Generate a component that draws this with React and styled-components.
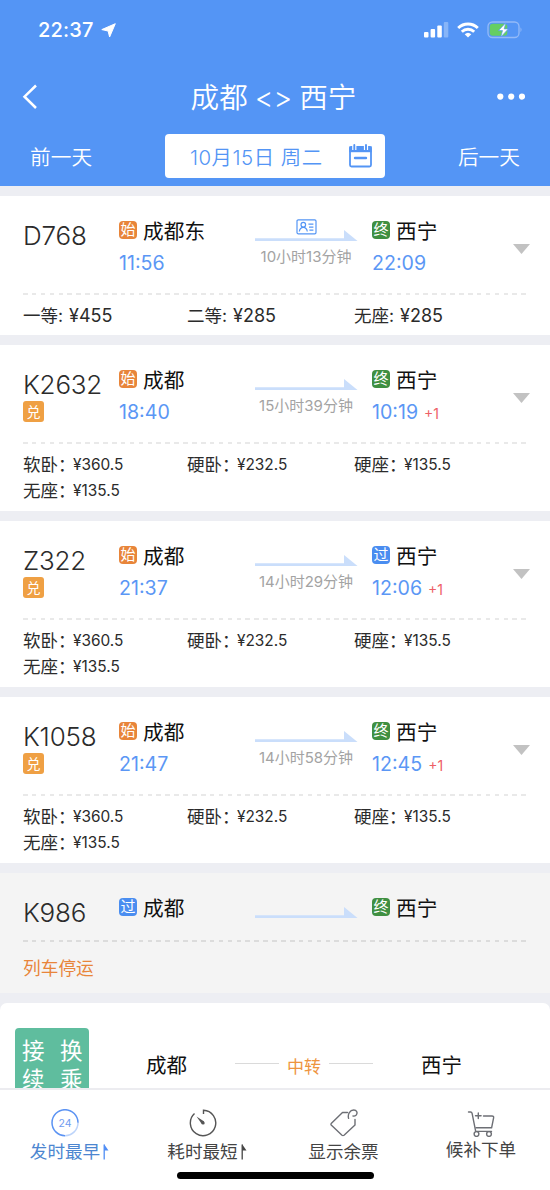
import styled, { createGlobalStyle } from 'styled-components';

// Define colors
const colors = {
    blue: '#5495f5',
    time: '#5b97f5',
    orange: '#e8853a',
    exchange: '#efa044',
    green: '#3f8f41',
    mint: '#5fbd9e',
    text: '#2b2b2b',
    grey: '#a3a3a3',
    red: '#ee5f66',
    gap: '#edeef3',
    white: '#fff',
};

const GlobalStyle = createGlobalStyle`
    * {
        box-sizing: border-box;
    }
    body {
        margin: 0;
        font-family: 'Inter', 'Noto Sans CJK SC', sans-serif;
        color: ${colors.text};
    }
    svg {
        display: block;
    }
`;

const Page = styled.div`
    width: 550px;
    height: 1190px;
    display: flex;
    flex-direction: column;
    overflow: hidden;
    background-color: ${colors.gap};
`;

const Header = styled.header`
    height: 186px;
    flex-shrink: 0;
    background-color: ${colors.blue};
    color: ${colors.white};
`;

const StatusBar = styled.div`
    height: 60px;
    padding: 0 28px 0 38px;
    display: flex;
    align-items: center;
    justify-content: space-between;
`;

const Clock = styled.div`
    display: flex;
    align-items: center;
    gap: 7px;
    font-size: 20px;
    font-weight: 500;
    letter-spacing: 0.2px;
`;

const StatusIcons = styled.div`
    display: flex;
    align-items: center;
    gap: 8px;
`;

const TitleBar = styled.div`
    height: 74px;
    padding: 0 25px 0 22px;
    display: grid;
    grid-template-columns: 30px 1fr 30px;
    align-items: center;
`;

const Title = styled.h1`
    margin: 0;
    padding-top: 1px;
    display: flex;
    justify-content: center;
    gap: 7px;
    font-size: 28.6px;
    line-height: 40px;
    font-weight: 350;
`;

const DayBar = styled.div`
    height: 44px;
    padding: 0 30px;
    display: flex;
    align-items: center;
    justify-content: space-between;
    font-size: 20.7px;
    font-weight: 350;
`;

const DateButton = styled.button`
    width: 220px;
    height: 44px;
    margin: 0;
    padding: 0 13px 0 25px;
    border: 0;
    border-radius: 4px;
    display: flex;
    align-items: center;
    justify-content: space-between;
    background-color: ${colors.white};
    color: ${colors.blue};
    font-family: inherit;
    font-size: 20.4px;
    font-weight: 350;
    letter-spacing: 0.5px;
    white-space: nowrap;
`;

const List = styled.main`
    flex: 1;
    min-height: 0;
    padding-top: 10px;
    display: flex;
    flex-direction: column;
    gap: 10px;
    overflow: hidden;
`;

const Card = styled.section`
    height: ${(p) => p.$height}px;
    flex-shrink: 0;
    padding: 0 20px 0 23px;
    background-color: ${(p) => (p.$stopped ? '#f4f4f4' : colors.white)};
`;

const TrainRow = styled.div`
    height: ${(p) => (p.$stopped ? 67 : 97)}px;
    display: grid;
    grid-template-columns: 96px 136px 117px 141px 17px;
    align-items: start;
`;

const TrainInfo = styled.div`
    padding-top: 24px;
`;

const TrainNo = styled.div`
    font-size: 26px;
    line-height: 32px;
    font-weight: 350;
    letter-spacing: -0.2px;
`;

const Exchange = styled.span`
    width: 21px;
    height: 21px;
    border-radius: 3px;
    display: flex;
    align-items: center;
    justify-content: center;
    background-color: ${colors.exchange};
    color: ${colors.white};
    font-size: 14px;
    line-height: 21px;
`;

const Stop = styled.div`
    padding-top: 21px;
`;

const Station = styled.div`
    height: 30px;
    display: flex;
    align-items: center;
    gap: 6px;
    font-size: 20.7px;
    line-height: 30px;
    color: #111;
`;

const badgeColors = { 始: colors.orange, 终: colors.green, 过: '#4a8df0' };

const Badge = styled.span`
    width: 18px;
    height: 18px;
    margin-top: -4px;
    border-radius: 4px;
    display: flex;
    align-items: center;
    justify-content: center;
    background-color: ${(p) => badgeColors[p.$kind]};
    color: ${colors.white};
    font-size: 15px;
    line-height: 18px;
`;

const Time = styled.div`
    height: 31px;
    display: flex;
    align-items: baseline;
    gap: 6px;
    font-size: 19.6px;
    line-height: 32px;
    color: ${colors.time};
`;

const NextDay = styled.span`
    font-size: 14px;
    color: ${colors.red};
`;

const Route = styled.div`
    width: 102px;
    padding-top: 22px;
`;

const IdSlot = styled.div`
    height: 12px;
    padding: 1px 0 0 41px;
`;

const Duration = styled.div`
    width: 102px;
    margin-top: 5px;
    text-align: center;
    font-size: 15px;
    line-height: 20px;
    color: ${colors.grey};
    white-space: nowrap;
`;

const Caret = styled.div`
    margin-top: 48px;
    width: 17px;
    height: 10px;
    background-color: #c2c2c2;
    clip-path: polygon(0 0, 100% 0, 50% 100%);
`;

const Dashes = styled.div`
    height: 2px;
    background: repeating-linear-gradient(90deg, ${(p) => (p.$stopped ? '#dcdcdc' : '#e9e9e9')} 0 4.6px, transparent 4.6px 8.9px);
`;

const Fares = styled.div`
    padding-top: 8px;
    display: grid;
    grid-template-columns: 164px 167px 1fr;
    grid-auto-rows: 26px;
    align-items: center;
`;

const Fare = styled.div`
    display: flex;
    align-items: center;
    font-size: 17.5px;
    line-height: 26px;
    white-space: nowrap;
`;

const FareLabel = styled.span`
    width: ${(p) => (p.$large ? 46 : 50)}px;
    font-feature-settings: 'halt';
`;

const Price = styled.span`
    font-size: ${(p) => (p.$large ? 18 : 15.4)}px;
`;

const Notice = styled.div`
    padding-top: 14px;
    font-size: 17.7px;
    line-height: 26px;
    color: ${colors.orange};
`;

const TransferCard = styled.section`
    height: 130px;
    flex-shrink: 0;
    padding: 25px 15px 0;
    border-radius: 7px 7px 0 0;
    display: grid;
    grid-template-columns: 131px 89px 138px 48px 1fr;
    background-color: ${colors.white};
`;

const TransferTag = styled.div`
    width: 74px;
    height: 90px;
    padding: 9px 7px;
    border-radius: 4px;
    display: grid;
    grid-template-columns: 22px 22px;
    grid-auto-rows: 28.5px;
    justify-content: space-between;
    background-color: ${colors.mint};
    color: ${colors.white};
    font-size: 22.5px;
    line-height: 28px;
`;

const TransferCity = styled.div`
    padding-top: 23px;
    font-size: 20.5px;
    line-height: 30px;
    color: #111;
`;

const Via = styled.div`
    height: 30px;
    margin-top: 22px;
    display: flex;
    align-items: center;
    justify-content: space-between;
    font-size: 17px;
    color: #ee9440;

    &::before,
    &::after {
        content: '';
        width: 44px;
        height: 1px;
        margin-top: -3px;
        background-color: #dadada;
    }
`;

const Footer = styled.footer`
    height: 102px;
    flex-shrink: 0;
    border-top: 2px solid #ececf0;
    display: flex;
    flex-direction: column;
    align-items: center;
    background-color: ${colors.white};
`;

const Tabs = styled.nav`
    width: 100%;
    height: 82px;
    padding-top: 19px;
    display: grid;
    grid-template-columns: 137px 138px 137px 138px;
`;

const Tab = styled.div`
    display: flex;
    flex-direction: column;
    align-items: center;
    padding-right: ${(p) => p.$shift || 0}px;
    color: ${(p) => (p.$active ? '#4c86d0' : '#444')};
`;

const TabIcon = styled.div`
    height: 29px;
`;

const TabLabel = styled.div`
    display: flex;
    align-items: center;
    margin-top: ${(p) => (p.$raised ? -2 : 0)}px;
    font-size: 17.6px;
    line-height: 28px;
    white-space: nowrap;
`;

// the mark hangs outside the label, so the label stays centred under its icon
const SortSlot = styled.span`
    margin: 0 -10px 0 3px;
`;

const HomeIndicator = styled.div`
    width: 197px;
    height: 7px;
    border-radius: 4px;
    background-color: #000;
`;

const LocationIcon = () => (
    <svg width="15" height="15" viewBox="0 0 15 15">
        <path d="M14.3.7 8.6 14 7.1 8 .8 6.6Z" fill="#fff" stroke="#fff" strokeWidth="1" strokeLinejoin="round" />
    </svg>
);

const SignalIcon = () => (
    <svg width="25" height="16" viewBox="0 0 25 16" fill="#fff">
        <rect x="0" y="10" width="4.5" height="5.5" rx="1" />
        <rect x="6.6" y="7" width="4.5" height="8.5" rx="1" />
        <rect x="13.3" y="3.5" width="4.5" height="12" rx="1" />
        <rect x="19.8" y="0" width="4.5" height="15.5" rx="1" opacity=".3" />
    </svg>
);

const WifiIcon = () => (
    <svg width="22" height="16" viewBox="0 0 22 16" fill="none" stroke="#fff" strokeWidth="2.9">
        <path d="M1.2 6A14 14 0 0 1 20.8 6" />
        <path d="M4.8 9.8A9 9 0 0 1 17.2 9.8" />
        <path d="M11 15.6 7.7 12.3A4.8 4.8 0 0 1 14.3 12.3Z" fill="#fff" stroke="none" />
    </svg>
);

const BatteryIcon = () => (
    <svg width="35" height="18" viewBox="0 0 35 18">
        <rect x="1" y="1" width="31" height="15.5" rx="4.5" fill="none" stroke="#94baf8" strokeWidth="1.3" />
        <path d="M33.5 6.2q2 2.5 0 5Z" fill="#94baf8" />
        <rect x="2.8" y="2.8" width="17.5" height="12" rx="3" fill="#65ce62" />
        <path d="M18.8 1.8 11.5 9.6H15.5L13.8 16 21.3 7.9H17.2Z" fill="#fff" stroke={colors.blue} strokeWidth=".7" />
    </svg>
);

const BackIcon = () => (
    <svg width="18" height="26" viewBox="0 0 18 26">
        <path d="M14 1.5 2.5 12.7 14 24" fill="none" stroke="#fff" strokeWidth="2.5" />
    </svg>
);

const MoreIcon = () => (
    <svg width="30" height="8" viewBox="0 0 30 8" fill="#fff">
        <circle cx="5.3" cy="3.6" r="3.1" />
        <circle cx="16.2" cy="3.6" r="3.1" />
        <circle cx="27" cy="3.6" r="3.1" />
    </svg>
);

const CalendarIcon = () => (
    <svg width="24" height="24" viewBox="0 0 24 24">
        <rect x="2" y="3" width="21" height="19.5" rx="1.5" fill="none" stroke={colors.blue} strokeWidth="1.8" />
        <path d="M1.2 2.4H23.8V8.2H1.2Z" fill={colors.blue} />
        <path d="M6.3 0V6M18 0V6" stroke="#fff" strokeWidth="4.2" />
        <path d="M6.3 1V5.4M18 1V5.4" stroke={colors.blue} strokeWidth="1.9" strokeLinecap="round" />
        <path d="M7 14H18" stroke={colors.blue} strokeWidth="2.4" strokeLinecap="round" />
    </svg>
);

const IdCardIcon = () => (
    <svg width="21" height="16" viewBox="0 0 21 16" fill="none" stroke={colors.blue} strokeWidth="1.2">
        <rect x="1" y=".8" width="19" height="14" rx="1.3" />
        <circle cx="7.3" cy="5.7" r="2.3" />
        <path d="M3.3 12.5Q4 8.4 7.3 8.4Q10.6 8.4 11.3 12.5" />
        <path d="M12.4 5.2H17.4M13 8.2H17.4M13.4 11.2H17.4" />
    </svg>
);

const RouteArrow = () => (
    <svg width="103" height="12" viewBox="0 0 103 12">
        <path d="M0 8.2H89V0L102.5 11H0Z" fill="#cadefb" />
    </svg>
);

const SortMark = ({ color }) => (
    <svg width="7" height="18" viewBox="0 0 7 18">
        <path d="M1.2 1.5V16.5" stroke={color} strokeWidth="1.3" />
        <path d="M1.2 1.2 5.5 7.5H1.2Z" fill={color} />
    </svg>
);

const DepartIcon = () => (
    <svg width="28" height="28" viewBox="0 0 28 28">
        <g fill="none" stroke="#5b93f3" strokeWidth="1.5">
            <path d="M14 26.7A13 13 0 1 1 27 13.7" />
            <path d="M27 13.7A13 13 0 0 1 14 26.7" opacity=".4" />
        </g>
        <text x="14" y="17.6" textAnchor="middle" fontSize="10.5" fill="#6f9cf0">24</text>
    </svg>
);

const TimerIcon = () => (
    <svg width="28" height="28" viewBox="0 0 28 28" fill="none" stroke="#555" strokeWidth="1.4">
        <path d="M14.5 5V1.3A12.7 12.7 0 1 1 5.5 4.6" />
        <path d="M7.5 7.5 15.2 12.6 13 15.2Z" fill="#555" stroke="none" />
        <circle cx="14.1" cy="14" r="1.6" fill="#555" stroke="none" />
    </svg>
);

const TagIcon = () => (
    <svg width="28" height="28" viewBox="0 0 28 28" fill="none" stroke="#6d6f75" strokeWidth="1.4" strokeLinejoin="round" strokeLinecap="round">
        <path d="M17.5 3.5H12.5L1.2 14.6Q.7 15.3 1.2 16L12 26.3Q13 27 14 26.3L25 16V10.5" />
        <path d="M18.6 9.4C17.4 5 20 1 23.7 1C26.8 1 28 4.1 26 6.2Q24.6 7.5 23 7" />
    </svg>
);

const CartIcon = () => (
    <svg width="28" height="28" viewBox="0 0 28 28" fill="none" stroke="#6d6f75" strokeWidth="1.4" strokeLinejoin="round" strokeLinecap="round">
        <path d="M1.5 3H3.5Q4.8 3 5.1 4.4L8.7 22.4H24.5" />
        <path d="M16.5 7H25Q27 7 26.6 8.9L24.6 18.8H9" />
        <path d="M11.3 4V9.6M8.5 6.8H14.1" />
        <circle cx="9.5" cy="25" r="2.4" />
        <circle cx="22" cy="25" r="2.4" />
    </svg>
);

const trains = [
    {
        no: 'D768',
        from: { kind: '始', name: '成都东', time: '11:56' },
        to: { kind: '终', name: '西宁', time: '22:09' },
        duration: '10小时13分钟',
        idCard: true,
        fares: [['一等', '455'], ['二等', '285'], ['无座', '285']],
    },
    {
        no: 'K2632',
        exchange: true,
        from: { kind: '始', name: '成都', time: '18:40' },
        to: { kind: '终', name: '西宁', time: '10:19', nextDay: true },
        duration: '15小时39分钟',
        fares: [['软卧', '360.5'], ['硬卧', '232.5'], ['硬座', '135.5'], ['无座', '135.5']],
    },
    {
        no: 'Z322',
        exchange: true,
        from: { kind: '始', name: '成都', time: '21:37' },
        to: { kind: '过', name: '西宁', time: '12:06', nextDay: true },
        duration: '14小时29分钟',
        fares: [['软卧', '360.5'], ['硬卧', '232.5'], ['硬座', '135.5'], ['无座', '135.5']],
    },
    {
        no: 'K1058',
        exchange: true,
        from: { kind: '始', name: '成都', time: '21:47' },
        to: { kind: '终', name: '西宁', time: '12:45', nextDay: true },
        duration: '14小时58分钟',
        fares: [['软卧', '360.5'], ['硬卧', '232.5'], ['硬座', '135.5'], ['无座', '135.5']],
    },
    {
        no: 'K986',
        stopped: true,
        from: { kind: '过', name: '成都' },
        to: { kind: '终', name: '西宁' },
        notice: '列车停运',
    },
];

const StopInfo = ({ stop }) => (
    <Stop>
        <Station>
            <Badge $kind={stop.kind}>{stop.kind}</Badge>
            {stop.name}
        </Station>
        {stop.time && (
            <Time>
                {stop.time}
                {stop.nextDay && <NextDay>+1</NextDay>}
            </Time>
        )}
    </Stop>
);

const cardHeight = (train) => {
    if (train.stopped) return 120;
    return train.fares.length > 3 ? 166 : 139;
};

const TrainCard = ({ train }) => {
    const large = train.idCard;

    return (
        <Card $height={cardHeight(train)} $stopped={train.stopped}>
            <TrainRow $stopped={train.stopped}>
                <TrainInfo>
                    <TrainNo>{train.no}</TrainNo>
                    {train.exchange && <Exchange>兑</Exchange>}
                </TrainInfo>
                <StopInfo stop={train.from} />
                <Route>
                    <IdSlot>{train.idCard && <IdCardIcon />}</IdSlot>
                    <RouteArrow />
                    {train.duration && <Duration>{train.duration}</Duration>}
                </Route>
                <StopInfo stop={train.to} />
                {!train.stopped && <Caret />}
            </TrainRow>
            <Dashes $stopped={train.stopped} />
            {train.notice && <Notice>{train.notice}</Notice>}
            {train.fares && (
                <Fares>
                    {train.fares.map(([seat, price]) => (
                        <Fare key={seat}>
                            <FareLabel $large={large}>{seat}{large ? ':' : '：'}</FareLabel>
                            <Price $large={large}>¥{price}</Price>
                        </Fare>
                    ))}
                </Fares>
            )}
        </Card>
    );
};

const App = () => {
    return (
        <Page>
            <GlobalStyle />
            <Header>
                <StatusBar>
                    <Clock>22:37<LocationIcon /></Clock>
                    <StatusIcons>
                        <SignalIcon />
                        <WifiIcon />
                        <BatteryIcon />
                    </StatusIcons>
                </StatusBar>
                <TitleBar>
                    <BackIcon />
                    <Title><span>成都</span><span>&lt;&gt;</span><span>西宁</span></Title>
                    <MoreIcon />
                </TitleBar>
                <DayBar>
                    <span>前一天</span>
                    <DateButton>
                        <span>10月15日 周二</span>
                        <CalendarIcon />
                    </DateButton>
                    <span>后一天</span>
                </DayBar>
            </Header>
            <List>
                {trains.map((train) => (
                    <TrainCard key={train.no} train={train} />
                ))}
                <TransferCard>
                    <TransferTag>
                        <span>接</span><span>换</span>
                        <span>续</span><span>乘</span>
                    </TransferTag>
                    <TransferCity>成都</TransferCity>
                    <Via>中转</Via>
                    <span />
                    <TransferCity>西宁</TransferCity>
                </TransferCard>
            </List>
            <Footer>
                <Tabs>
                    <Tab $active $shift={7}>
                        <TabIcon><DepartIcon /></TabIcon>
                        <TabLabel>发时最早<SortSlot><SortMark color="#4f8df5" /></SortSlot></TabLabel>
                    </Tab>
                    <Tab $shift={7}>
                        <TabIcon><TimerIcon /></TabIcon>
                        <TabLabel>耗时最短<SortSlot><SortMark color="#444" /></SortSlot></TabLabel>
                    </Tab>
                    <Tab>
                        <TabIcon><TagIcon /></TabIcon>
                        <TabLabel>显示余票</TabLabel>
                    </Tab>
                    <Tab>
                        <TabIcon><CartIcon /></TabIcon>
                        <TabLabel $raised>候补下单</TabLabel>
                    </Tab>
                </Tabs>
                <HomeIndicator />
            </Footer>
        </Page>
    );
};

export default App;
